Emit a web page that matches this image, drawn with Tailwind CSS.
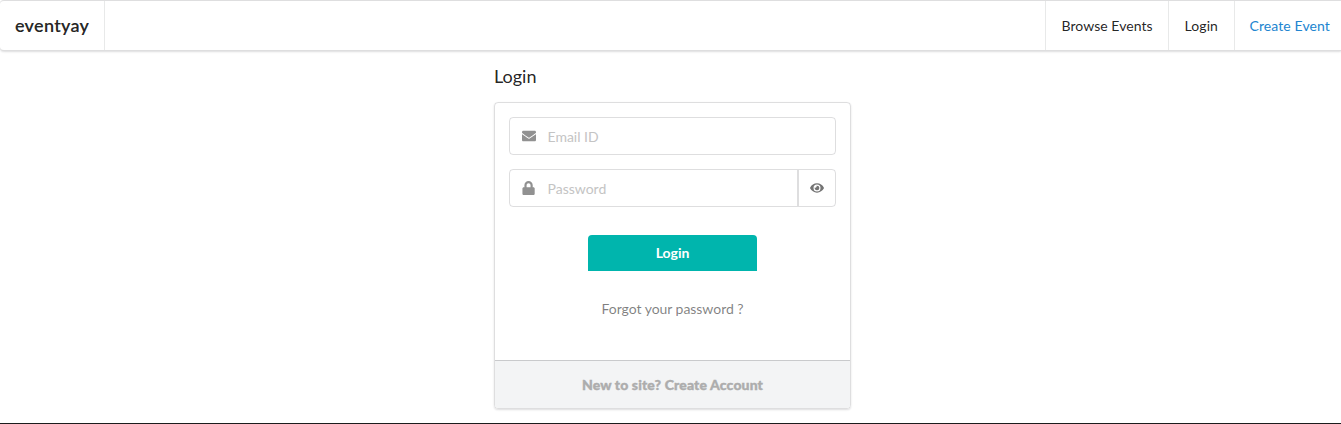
<!DOCTYPE html>
<html lang="en"><head><meta charset="utf-8"><title>eventyay</title>
<script src="https://cdn.jsdelivr.net/npm/@tailwindcss/browser@4"></script></head>
<body class="bg-white font-['Lato',sans-serif] text-[14px] leading-[20px] text-black/87">
<div class="h-[424px] overflow-hidden flex flex-col border-b border-[#1b1c1d]">
<nav class="h-[51px] shrink-0 flex border border-x-0 border-[#22242626] rounded-l-[4px] shadow-[0_1px_2px_0_rgba(34,36,38,0.15)]">
<a class="w-[105px] pb-[2px] pl-[15px] flex items-center border-r border-[#2224261a] text-[18px] font-semibold tracking-[0.28px] [-webkit-text-stroke:0.15px]">eventyay</a>
<div class="ml-auto flex">
<a class="w-[123px] flex items-center pl-[15.500px] border-l border-[#2224261a] tracking-[0.05px]">Browse Events</a>
<a class="w-[66px] flex items-center pl-[15.500px] border-l border-[#2224261a] tracking-[0.1px]">Login</a>
<a class="w-[107px] flex items-center pl-[14.500px] border-l border-[#2224261a] text-[#2185d0] tracking-[0.1px]">Create Event</a>
</div></nav>
<main class="w-[357px] ml-[494px]">
<h1 class="mt-[14px] text-[18px] leading-[23px]">Login</h1>
<form class="mt-[14px] h-[307px] flex flex-col rounded-[4px] border border-[#22242626] shadow-[0_1px_2px_0_rgba(34,36,38,0.15)] overflow-hidden">
<div class="px-[14px] pt-[14px] flex flex-col items-center grow">
<div class="w-[327px] h-[38px] flex items-center border border-[#22242626] rounded-[4px]">
<svg class="ml-[12px] w-[14px] h-[14px] text-[#919191]" viewBox="0 0 512 512" fill="currentColor"><path d="M502.300 190.800c3.900-3.100 9.700-.2 9.700 4.700V400c0 26.500-21.500 48-48 48H48c-26.500 0-48-21.500-48-48V195.600c0-5 5.700-7.800 9.700-4.700 22.400 17.400 52.100 39.500 154.100 113.600 21.100 15.400 56.700 47.800 92.200 47.600 35.700.3 72-32.800 92.300-47.600 102-74.100 131.600-96.300 154-113.700zM256 320c23.200.4 56.600-29.200 73.400-41.400 132.700-96.300 142.800-104.700 173.400-128.700 5.800-4.500 9.200-11.500 9.200-18.900v-19c0-26.500-21.500-48-48-48H48c-26.500 0-48 21.500-48 48v19c0 7.400 3.400 14.300 9.200 18.900 30.600 23.900 40.700 32.400 173.400 128.700 16.800 12.200 50.200 41.800 73.400 41.400z"/></svg>
<span class="ml-[11.500px] pt-[2px] text-[#c4c4c4]">Email ID</span></div>
<div class="mt-[14px] w-[327px] h-[38px] flex items-stretch border border-[#22242626] rounded-[4px]">
<div class="flex items-center grow"><svg class="ml-[12px] w-[14px] h-[14px] text-[#919191]" viewBox="16 0 512 512" fill="currentColor"><path d="M432 224h-24v-72C408 68.200 339.800 0 256 0S104 68.200 104 152v72H80c-26.500 0-48 21.500-48 48v192c0 26.500 21.500 48 48 48h352c26.500 0 48-21.500 48-48V272c0-26.500-21.500-48-48-48zm-104 0H184v-72c0-39.700 32.300-72 72-72s72 32.300 72 72v72z"/></svg>
<span class="ml-[11.500px] pt-[2px] text-[#c4c4c4]">Password</span></div>
<div class="w-[38px] flex items-center justify-center border-l-2 border-[#22242626]"><svg class="w-[14px] h-[14px] text-[#747474]" viewBox="0 0 576 512" fill="currentColor"><path d="M572.520 241.400C518.290 135.590 410.930 64 288 64S57.680 135.640 3.480 241.410a32.350 32.350 0 0 0 0 29.190C57.710 376.410 165.070 448 288 448s230.320-71.640 284.520-177.410a32.350 32.350 0 0 0 0-29.190zM288 400a144 144 0 1 1 144-144 143.930 143.930 0 0 1-144 144zm0-240a95.310 95.310 0 0 0-25.310 3.790 47.850 47.850 0 0 1-66.900 66.900A95.780 95.780 0 1 0 288 160z"/></svg></div></div>
<button type="button" class="mt-[28px] w-[169px] h-[36px] bg-[#00b5ad] text-white font-bold rounded-t-[4px]">Login</button>
<a class="mt-[28px] text-black/50 tracking-[-0.04px]">Forgot your password ?</a>
</div>
<div class="h-[48px] shrink-0 flex items-center justify-center border-t border-[#22242633] bg-[#f3f4f5] font-black text-[#adadad] tracking-[0.13px] [-webkit-text-stroke:0.4px]">New to site? Create Account</div>
</form></main></div></body></html>
